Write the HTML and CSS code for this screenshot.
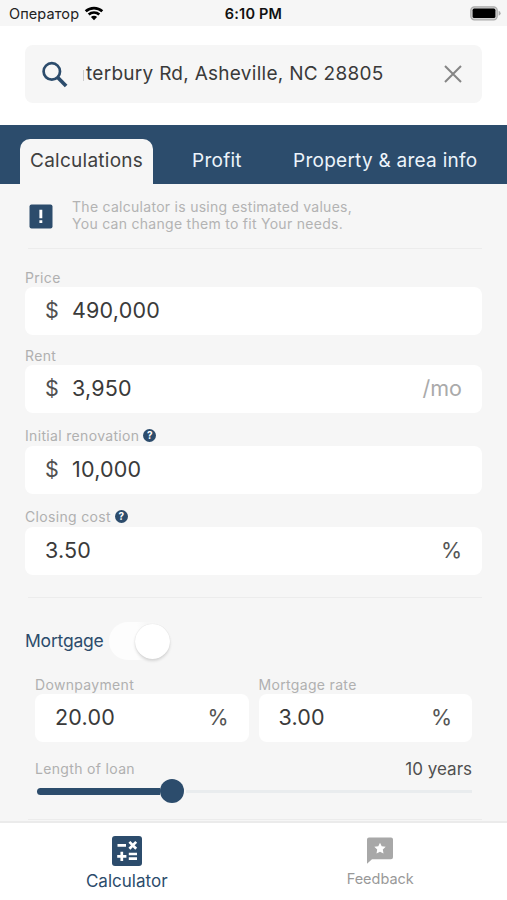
FILE: index.html
```html
<!DOCTYPE html>
<html lang="en">
<head>
<meta charset="utf-8">
<meta name="viewport" content="width=device-width">
<title>Calculator</title>
<link rel="stylesheet" href="styles.css">
</head>
<body>
<div class="app">
  <div class="status">
    <div class="carrier"><span>Оператор</span>
      <svg width="20" height="15" viewBox="0 0 20 15" fill="none" stroke="#000" stroke-width="2.7"><path d="M1.7 5.3A12.2 12.2 0 0 1 18.3 5.3"/><path d="M4.7 8.6A7.8 7.8 0 0 1 15.3 8.6"/><path d="M10 14.2 6.9 11A4.4 4.4 0 0 1 13.1 11Z" fill="#000" stroke="none"/></svg>
    </div>
    <div class="time">6:10 PM</div>
    <svg class="battery" width="31" height="15" viewBox="0 0 31 15"><rect x=".8" y=".8" width="26.4" height="13" rx="3.6" fill="#d2d2d2" stroke="#aaa" stroke-width="1.2"/><rect x="2.6" y="2.6" width="22.8" height="9.4" rx="1.6"/><path d="M28.6 4.8q2 .8 2 2.5t-2 2.5z" fill="#aaa"/></svg>
  </div>
  <header class="search-area">
    <div class="search">
      <svg class="lens" width="26" height="27" viewBox="0 0 26 27" fill="none" stroke="#2c4c6c"><circle cx="9.8" cy="10.4" r="8.2" stroke-width="2.7"/><path d="M15.5 16.2 24.1 25" stroke-width="3.7"/></svg>
      <div class="query"><span>terbury Rd, Asheville, NC 28805</span></div>
      <svg class="clear" width="18" height="18" viewBox="0 0 18 18" stroke="#858585" stroke-width="2"><path d="M1 1 17 17M17 1 1 17"/></svg>
    </div>
  </header>
  <nav class="tabs">
    <div class="tab active"><span>Calculations</span></div>
    <div class="tab profit"><span>Profit</span></div>
    <div class="tab property"><span>Property &amp; area info</span></div>
  </nav>
  <main class="content">
    <div class="notice">
      <svg width="24" height="25" viewBox="0 0 24 25"><rect x=".5" y=".5" width="23" height="24" rx="2" fill="#2c4c6c"/><path d="M10.4 5.8h2.9v8.4h-2.9zM10.4 16.3h2.9v2.6h-2.9z" fill="#fff"/></svg>
      <p>The calculator is using estimated values,<br>You can change them to fit Your needs.</p>
    </div>
    <hr>
    <div class="group price"><label>Price</label><div class="field"><i>$</i><b>490,000</b></div></div>
    <div class="group rent"><label>Rent</label><div class="field"><i>$</i><b>3,950</b><em class="muted">/mo</em></div></div>
    <div class="group renovation"><label>Initial renovation<span class="help">?</span></label><div class="field"><i>$</i><b>10,000</b></div></div>
    <div class="group closing"><label>Closing cost<span class="help">?</span></label><div class="field"><b>3.50</b><em>%</em></div></div>
    <hr class="second">
    <div class="mortgage"><span>Mortgage</span><div class="toggle"><div class="knob"></div></div></div>
    <div class="loan">
      <div class="pair">
        <div class="group"><label>Downpayment</label><div class="field"><b>20.00</b><em>%</em></div></div>
        <div class="group"><label>Mortgage rate</label><div class="field"><b>3.00</b><em>%</em></div></div>
      </div>
      <div class="length"><label>Length of loan</label><span>10 years</span></div>
      <div class="slider"><div class="filled"></div><div class="handle"></div><div class="rest"></div></div>
    </div>
    <hr class="last">
  </main>
  <footer class="bottom">
    <div class="item calc">
      <svg width="30" height="30" viewBox="0 0 30 30"><rect width="30" height="30" rx="3" fill="#2c4c6c"/><path d="M5.5 9.3h8.5M17.4 5.9l6.8 6.8m0-6.8-6.8 6.8M5.2 20.3h9.2M9.8 15.7v9.2M16.8 18h8.2M16.8 22.6h8.2" fill="none" stroke="#fff" stroke-width="2.7"/></svg>
      <span>Calculator</span>
    </div>
    <div class="item feedback">
      <svg width="26" height="27" viewBox="0 0 26 27"><path d="M2 .5h22q2 0 2 2v17.7q0 2-2 2H5L0 26.8V2.5q0-2 2-2z" fill="#a8a8a8"/><path d="m13 5.7 1.7 3.6 4 .5-2.9 2.8.7 4-3.5-1.9-3.5 1.9.7-4-2.9-2.8 4-.5z" fill="#fff"/></svg>
      <span>Feedback</span>
    </div>
  </footer>
</div>
</body>
</html>
```
FILE: styles.css
```css
* { box-sizing: border-box; }
body { margin: 0; font-family: Inter, "Liberation Sans", sans-serif; color: #3a3a3a; background: #fff; }
.app { width: 507px; height: 900px; display: flex; flex-direction: column; overflow: hidden; }
svg { display: block; flex: none; }
.status { height: 26px; flex: none; background: #f6f6f6; display: grid; grid-template-columns: 1fr auto 1fr; align-items: center; padding: 1px 6px 0 9px; }
.carrier { display: flex; align-items: center; gap: 5px; font-size: 14.5px; letter-spacing: .1px; color: #222; }
.time { font-size: 14.5px; font-weight: 600; letter-spacing: .2px; color: #111; margin-left: -3px; }
.battery { justify-self: end; }
.search-area { height: 99px; flex: none; padding: 19px 25px 0; }
.search { height: 58px; border-radius: 8px; background: #f6f6f6; display: flex; align-items: center; padding: 0 20px 0 17px; }
.query { flex: 1; margin: -2px 0 0 15px; padding-left: 2px; font-size: 19px; letter-spacing: .28px; white-space: nowrap; border-left: 1px solid transparent; border-image: linear-gradient(transparent 35%, #ccc 35%, #ccc 80%, transparent 80%) 1; }
.tabs { height: 59px; flex: none; background: #2c4c6c; display: flex; padding: 14px 0 0 20px; color: #edf4fb; font-size: 19px; letter-spacing: .26px; line-height: 43px; white-space: nowrap; }
.active { width: 133px; height: 45px; background: #f6f6f6; color: #404040; border-radius: 10px 10px 0 0; padding-left: 10px; }
.profit { margin-left: 39px; width: 101px; }
.content { flex: 1; background: #f6f6f6; padding: 15px 25px 0; }
.notice { display: flex; height: 34px; align-items: center; padding-left: 4px; gap: 19px; }
.notice p { margin: -2px 0 0; color: #b3b3b3; font-size: 14px; line-height: 17px; letter-spacing: .28px; white-space: nowrap; }
hr { border: 0; height: 1px; background: #ececec; margin: 15px 0 0 3px; }
.group { display: flex; flex-direction: column; }
label { height: 18px; font-size: 14px; line-height: 18px; letter-spacing: .33px; color: #b0b0b0; display: flex; align-items: center; white-space: nowrap; }
.help { width: 13px; height: 13px; border-radius: 50%; background: #2c4c6c; color: #fff; font-size: 10px; line-height: 13px; font-weight: 700; text-align: center; letter-spacing: 0; margin-left: 4px; }
.field { height: 48px; border-radius: 8px; background: #fff; display: flex; align-items: center; padding: 0 20px 2px; font-size: 21.5px; line-height: 26px; }
.field b { font-weight: 400; letter-spacing: .2px; }
.field i { font-style: normal; width: 27px; color: #505050; }
.field em { font-style: normal; margin-left: auto; color: #555; }
.field .muted { color: #aaa; }
.price { margin-top: 20px; }
.rent { margin-top: 12px; }
.renovation { margin-top: 14px; }
.closing { margin-top: 14px; }
.renovation label, .closing label { height: 19px; padding-bottom: 2px; }
.second { margin-top: 22px; }
.mortgage { display: flex; align-items: center; height: 38px; margin-top: 24px; font-size: 17.5px; letter-spacing: -.2px; color: #2c4c6c; }
.mortgage > span { width: 84px; margin-top: -2px; }
.toggle { width: 62px; height: 38px; border-radius: 19px; background: linear-gradient(90deg, #fdfdfd 45%, #f7f7f7 60%); padding: 2px 1px 0 26px; }
.knob { width: 35px; height: 35px; border-radius: 50%; background: #fff; box-shadow: 0 2px 3px #0002, 0 0 1px #0002; }
.loan { padding: 0 10px; }
.pair { display: grid; grid-template-columns: 1fr 1fr; gap: 10px; margin-top: 16px; }
.length { height: 26px; margin-top: 14px; display: flex; align-items: center; justify-content: space-between; }
.length span { font-size: 17px; color: #505050; letter-spacing: 0; margin-top: -1px; }
.slider { height: 26px; display: flex; align-items: center; padding: 0 0 0 2px; margin-top: -4px; }
.filled { width: 123px; height: 7px; border-radius: 4px 0 0 4px; background: #2c4c6c; }
.handle { width: 24px; height: 24px; border-radius: 50%; background: #2c4c6c; }
.rest { flex: 1; height: 3px; margin-left: 2px; background: #e9ecee; }
.last { margin-top: 15px; }
.bottom { height: 79px; flex: none; margin-top: -1px; border-top: 2px solid #ebebeb; display: grid; grid-template-columns: 1fr 1fr; background: #fff; }
.item { display: flex; flex-direction: column; align-items: center; }
.calc { padding-top: 13px; color: #2c4c6c; font-size: 17px; line-height: 22px; }
.calc span { margin-top: 4px; letter-spacing: .02px; }
.feedback { padding-top: 14px; color: #999; font-size: 14.5px; line-height: 20px; }
.feedback span { margin-top: 5px; letter-spacing: 0; }
```
